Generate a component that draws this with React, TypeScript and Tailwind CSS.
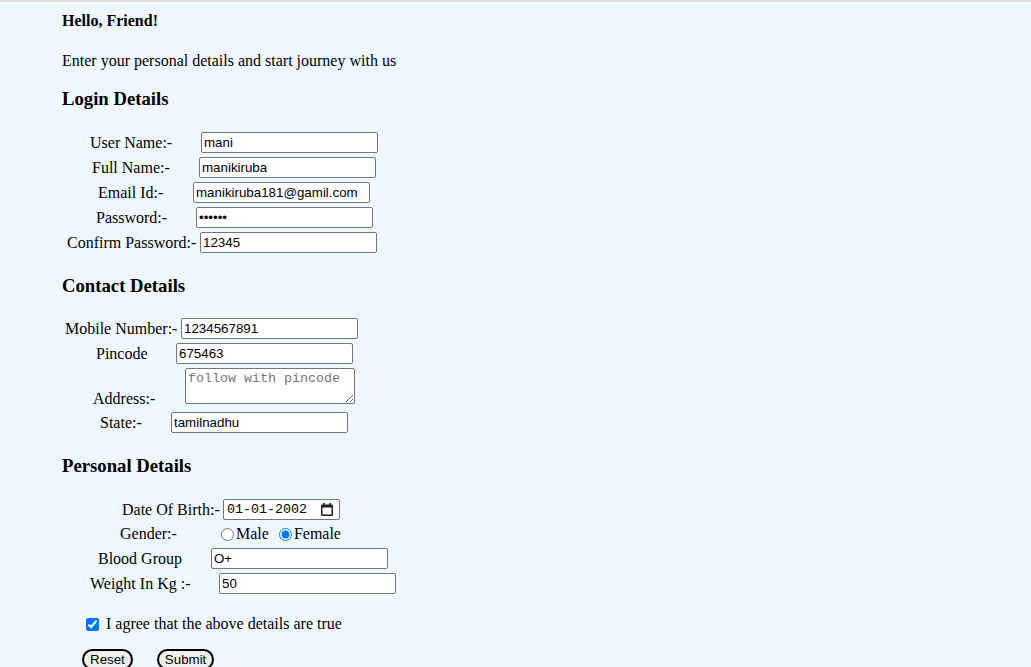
import type { ReactNode } from 'react';

const serif = "[font-family:'Liberation_Serif','Times_New_Roman',serif]";
const inputCls =
  "block h-[21px] w-[177px] shrink-0 rounded-[2px] border border-[#767676] bg-white px-[2px] py-[1px] text-[13.33px] leading-[17px] text-black outline-none [font-family:'Liberation_Sans',Arial,sans-serif]";

function Row({ pad, lw, label, h = 'h-[25px]', children }: { pad: string; lw: string; label: string; h?: string; children: ReactNode }) {
  return (
    <div className={`flex items-center whitespace-nowrap ${h} ${pad}`}>
      <span className={`shrink-0 ${lw}`}>{label}</span>
      {children}
    </div>
  );
}

function Heading({ children, className = '' }: { children: ReactNode; className?: string }) {
  return <h3 className={`pl-[62px] text-[18.72px] font-bold leading-[22px] ${className}`}>{children}</h3>;
}

export default function App() {
  return (
    <div className={`h-[667px] overflow-hidden bg-[#f0f8ff] text-[16px] text-black ${serif}`}>
      <div className="h-[2px] bg-[#dcdcdc]" />

      <p className="pl-[62px] pt-[10px] font-bold leading-[18px]">Hello, Friend!</p>
      <p className="mt-[22px] pl-[62px] leading-[18px]">Enter your personal details and start journey with us</p>

      {/* Login */}
      <Heading className="mt-[18px]">Login Details</Heading>
      <div className="mt-[20px]">
        <Row pad="pl-[90px]" lw="w-[111px]" label="User Name:-">
          <input className={inputCls} defaultValue="mani" />
        </Row>
        <Row pad="pl-[92px]" lw="w-[107px]" label="Full Name:-">
          <input className={inputCls} defaultValue="manikiruba" />
        </Row>
        <Row pad="pl-[98px]" lw="w-[95px]" label="Email Id:-">
          <input className={inputCls} defaultValue="manikiruba181@gamil.com" />
        </Row>
        <Row pad="pl-[96px]" lw="w-[100px]" label="Password:-">
          <input type="password" className={inputCls} defaultValue="123456" />
        </Row>
        <Row pad="pl-[67px]" lw="w-[133px]" label="Confirm Password:-">
          <input className={inputCls} defaultValue="12345" />
        </Row>
      </div>

      {/* Contact */}
      <Heading className="mt-[20px]">Contact Details</Heading>
      <div className="mt-[19px]">
        <Row pad="pl-[65px]" lw="w-[116px]" label="Mobile Number:-">
          <input className={inputCls} defaultValue="1234567891" />
        </Row>
        <Row pad="pl-[96px]" lw="w-[80px]" label="Pincode">
          <input className={inputCls} defaultValue="675463" />
        </Row>
        <div className="whitespace-nowrap pb-[2px] pl-[93px] pt-[2px] leading-[18px]">
          <span className="inline-block w-[92px]">Address:-</span>
          <textarea
            className="inline-block h-[36px] w-[170px] rounded-[2px] border border-[#767676] bg-white p-[2px] align-baseline text-[13.33px] leading-[15px] outline-none placeholder:text-[#757575] [font-family:'Liberation_Mono','Courier_New',monospace]"
            placeholder="follow with pincode"
          />
        </div>
        <Row pad="pl-[100px]" lw="w-[71px]" label="State:-">
          <input className={inputCls} defaultValue="tamilnadhu" />
        </Row>
      </div>

      {/* Personal */}
      <Heading className="mt-[20px]">Personal Details</Heading>
      <div className="mt-[20px]">
        <Row pad="pl-[122px]" lw="w-[101px]" label="Date Of Birth:-">
          <div className="flex h-[21px] w-[117px] shrink-0 items-center justify-between rounded-[2px] border border-[#767676] bg-white pl-[3px] pr-[6px]">
            <span className="text-[13.33px] leading-[15px] [font-family:'Liberation_Mono','Courier_New',monospace]">01-01-2002</span>
            <svg width="12" height="13" viewBox="0 0 12 13">
              <path
                fillRule="evenodd"
                fill="#1f1f1f"
                d="M2 0h1.6v1.5h4.8V0H10v1.5h1a1 1 0 0 1 1 1V12a1 1 0 0 1-1 1H1a1 1 0 0 1-1-1V2.5a1 1 0 0 1 1-1h1z M1.5 4.5v7h9v-7z"
              />
            </svg>
          </div>
        </Row>
        <Row pad="pl-[120px]" lw="w-[101px]" label="Gender:-" h="h-[24px]">
          <input type="radio" name="gender" className="m-0 h-[13px] w-[13px] shrink-0 accent-[#0075ff]" />
          <span className="ml-[2px]">Male</span>
          <input type="radio" name="gender" defaultChecked className="ml-[10px] h-[13px] w-[13px] shrink-0 accent-[#0075ff]" />
          <span className="ml-[2px]">Female</span>
        </Row>
        <Row pad="pl-[98px]" lw="w-[113px]" label="Blood Group">
          <input className={inputCls} defaultValue="O+" />
        </Row>
        <Row pad="pl-[90px]" lw="w-[129px]" label="Weight In Kg :-">
          <input className={inputCls} defaultValue="50" />
        </Row>
      </div>

      <label className="mt-[19px] flex h-[18px] items-center pl-[86px] leading-[18px]">
        <input type="checkbox" defaultChecked className="m-0 h-[13px] w-[13px] accent-[#0075ff]" />
        <span className="ml-[7px]">I agree that the above details are true</span>
      </label>

      <div className="mt-[16px] flex gap-[24px] pl-[82px]">
        <button className="h-[21px] rounded-full border-2 border-black bg-[#efefef] px-[6px] text-[13.33px] leading-[15px] [font-family:'Liberation_Sans',Arial,sans-serif]">
          Reset
        </button>
        <button className="h-[21px] rounded-full border-2 border-black bg-[#efefef] px-[6px] text-[13.33px] leading-[15px] [font-family:'Liberation_Sans',Arial,sans-serif]">
          Submit
        </button>
      </div>
    </div>
  );
}
